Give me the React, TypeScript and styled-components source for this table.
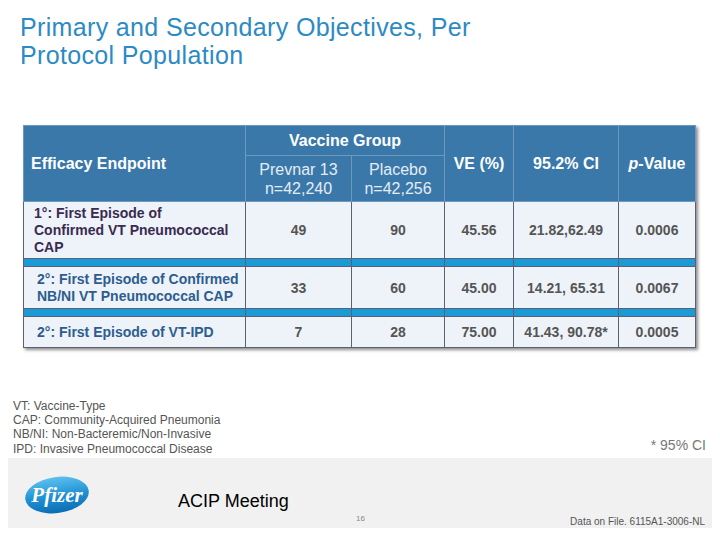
import React from 'react';
import styled, {createGlobalStyle} from 'styled-components';

const GlobalStyle = createGlobalStyle`
  html, body {
    margin: 0;
    padding: 0;
    background: #ffffff;
  }
  body {
    font-family: 'Liberation Sans', Arial, sans-serif;
  }
`;

const Page = styled.div`
  width: 720px;
  height: 540px;
  display: flex;
  flex-direction: column;
  overflow: hidden;
`;

const TitleBlock = styled.div`
  height: 125px;
  box-sizing: border-box;
  padding: 13px 0 0 20px;
`;

const Title = styled.h1`
  margin: 0;
  font-size: 25px;
  line-height: 28px;
  letter-spacing: 0.35px;
  font-weight: normal;
  color: #2c8ac4;
`;

const TableWrap = styled.div`
  padding-left: 23px;
`;

const Table = styled.table`
  width: 672px;
  table-layout: fixed;
  border-collapse: collapse;
  box-shadow: 2px 2px 3px rgba(0, 0, 0, 0.45);
  font-size: 14px;
`;

const HeadCell = styled.th<{$align?: string; $light?: boolean; $bold?: boolean}>`
  background: #3a78aa;
  color: ${p => (p.$light ? '#e4ecf4' : '#ffffff')};
  font-weight: ${p => (p.$bold === false ? 'normal' : 'bold')};
  font-size: 16px;
  line-height: 19px;
  text-align: ${p => p.$align || 'center'};
  padding: ${p => (p.$align === 'left' ? '0 0 0 7px' : '0')};
  border: 1px solid #6d98bf;
  vertical-align: middle;
`;

const Row = styled.tr<{$h: number}>`
  height: ${p => p.$h}px;
`;

const LabelCell = styled.td<{$tone: 'dark' | 'blue'; $pad: number}>`
  background: #eef3fa;
  border: 1px solid #5c6070;
  color: ${p => (p.$tone === 'dark' ? '#3a2a50' : '#2d5d8e')};
  font-weight: bold;
  font-size: 14px;
  line-height: 17px;
  padding: 0 0 0 ${p => p.$pad}px;
  vertical-align: middle;
`;

const NumCell = styled.td`
  background: #eef3fa;
  border: 1px solid #5c6070;
  color: #555555;
  font-weight: bold;
  text-align: center;
  vertical-align: middle;
`;

const SepRow = styled.tr`
  height: 8px;
`;

const SepCell = styled.td`
  background: #1a9ad6;
  border: 1px solid #5c6070;
  padding: 0;
`;

const Notes = styled.div`
  height: 110px;
  box-sizing: border-box;
  display: flex;
  align-items: flex-end;
  justify-content: space-between;
  padding: 0 14px 2px 13px;
`;

const Legend = styled.div`
  font-size: 12px;
  line-height: 14.3px;
  color: #555555;
`;

const CiNote = styled.div`
  font-size: 14px;
  color: #777777;
  margin-bottom: 3px;
`;

const Footer = styled.div`
  height: 70px;
  margin: 0 8px;
  background: #f1f1f1;
  display: flex;
  padding: 0 7px 0 16px;
`;

const Logo = styled.svg`
  align-self: center;
  margin-top: 4px;
  flex: none;
`;

const Meeting = styled.div`
  align-self: center;
  margin: 16px 0 0 88px;
  width: 178px;
  font-size: 18px;
  color: #000000;
`;

const PageNum = styled.div`
  align-self: flex-end;
  margin-bottom: 5px;
  font-size: 8px;
  color: #888888;
`;

const DataNote = styled.div`
  align-self: flex-end;
  margin: 0 0 1px auto;
  font-size: 10px;
  color: #555555;
`;

const rows = [
  {
    label: (
      <>
        1°: First Episode of
        <br />
        Confirmed VT Pneumococcal
        <br />
        CAP
      </>
    ),
    tone: 'dark' as const,
    pad: 10,
    h: 57,
    values: ['49', '90', '45.56', '21.82,62.49', '0.0006'],
  },
  {
    label: (
      <>
        2°: First Episode of Confirmed
        <br />
        NB/NI VT Pneumococcal CAP
      </>
    ),
    tone: 'blue' as const,
    pad: 13,
    h: 42,
    values: ['33', '60', '45.00', '14.21, 65.31', '0.0067'],
  },
  {
    label: <>2°: First Episode of VT-IPD</>,
    tone: 'blue' as const,
    pad: 13,
    h: 31,
    values: ['7', '28', '75.00', '41.43, 90.78*', '0.0005'],
  },
];

function PfizerLogo() {
  return (
    <Logo width="66" height="40" viewBox="0 0 66 40">
      <defs>
        <linearGradient id="pfz" x1="0" y1="0" x2="0" y2="1">
          <stop offset="0" stopColor="#5cc0ee" />
          <stop offset="0.55" stopColor="#1f8fd2" />
          <stop offset="1" stopColor="#0b6db3" />
        </linearGradient>
      </defs>
      <ellipse cx="33" cy="20" rx="32" ry="18" fill="url(#pfz)" transform="rotate(-8 33 20)" />
      <text
        x="33"
        y="27"
        textAnchor="middle"
        fill="#ffffff"
        fontFamily="'Liberation Serif', serif"
        fontStyle="italic"
        fontWeight="bold"
        fontSize="21">
        Pfizer
      </text>
    </Logo>
  );
}

export default function App() {
  return (
    <Page>
      <GlobalStyle />
      <TitleBlock>
        <Title>
          Primary and Secondary Objectives, Per
          <br />
          Protocol Population
        </Title>
      </TitleBlock>
      <TableWrap>
        <Table>
          <colgroup>
            <col style={{width: 222}} />
            <col style={{width: 106}} />
            <col style={{width: 93}} />
            <col style={{width: 69}} />
            <col style={{width: 105}} />
            <col style={{width: 77}} />
          </colgroup>
          <thead>
            <Row $h={30}>
              <HeadCell rowSpan={2} $align="left">
                Efficacy Endpoint
              </HeadCell>
              <HeadCell colSpan={2}>Vaccine Group</HeadCell>
              <HeadCell rowSpan={2}>VE (%)</HeadCell>
              <HeadCell rowSpan={2}>95.2% CI</HeadCell>
              <HeadCell rowSpan={2}>
                <i>p</i>-Value
              </HeadCell>
            </Row>
            <Row $h={46}>
              <HeadCell $light $bold={false}>
                Prevnar 13
                <br />
                n=42,240
              </HeadCell>
              <HeadCell $light $bold={false}>
                Placebo
                <br />
                n=42,256
              </HeadCell>
            </Row>
          </thead>
          <tbody>
            {rows.map((r, i) => (
              <React.Fragment key={i}>
                {i > 0 && (
                  <SepRow>
                    {Array.from({length: 6}).map((_, j) => (
                      <SepCell key={j} />
                    ))}
                  </SepRow>
                )}
                <Row $h={r.h}>
                  <LabelCell $tone={r.tone} $pad={r.pad}>
                    {r.label}
                  </LabelCell>
                  {r.values.map((v, j) => (
                    <NumCell key={j}>{v}</NumCell>
                  ))}
                </Row>
              </React.Fragment>
            ))}
          </tbody>
        </Table>
      </TableWrap>
      <Notes>
        <Legend>
          VT: Vaccine-Type
          <br />
          CAP: Community-Acquired Pneumonia
          <br />
          NB/NI: Non-Bacteremic/Non-Invasive
          <br />
          IPD: Invasive Pneumococcal Disease
        </Legend>
        <CiNote>* 95% CI</CiNote>
      </Notes>
      <Footer>
        <PfizerLogo />
        <Meeting>ACIP Meeting</Meeting>
        <PageNum>16</PageNum>
        <DataNote>Data on File. 6115A1-3006-NL</DataNote>
      </Footer>
    </Page>
  );
}
